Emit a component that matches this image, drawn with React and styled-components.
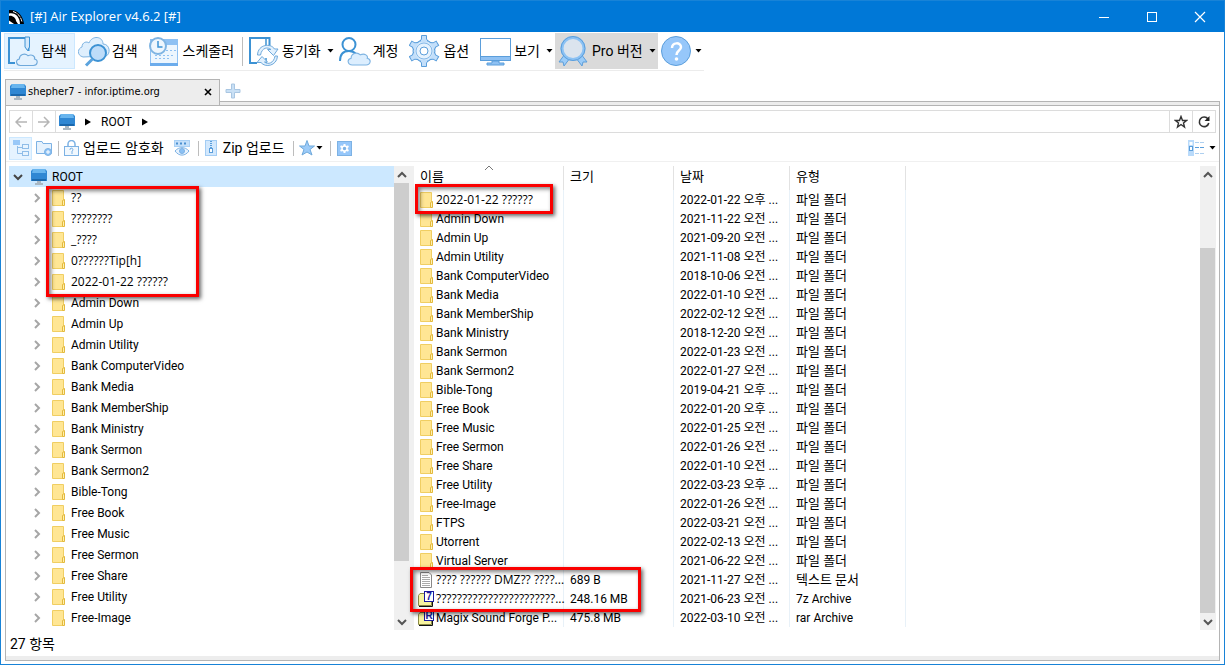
import React, { useState } from 'react'
import styled, { createGlobalStyle } from 'styled-components';

const folders = [
  "Admin Down",
  "Admin Up",
  "Admin Utility",
  "Bank ComputerVideo",
  "Bank Media",
  "Bank MemberShip",
  "Bank Ministry",
  "Bank Sermon",
  "Bank Sermon2",
  "Bible-Tong",
  "Free Book",
  "Free Music",
  "Free Sermon",
  "Free Share",
  "Free Utility",
  "Free-Image",
];

const treeItems = ["??", "????????", "_????", "0??????Tip[h]", "2022-01-22 ??????", ...folders];

const files = [
  { name: "2022-01-22 ??????", date: "2022-01-22 오후 ..." },
  { name: "Admin Down", date: "2021-11-22 오전 ..." },
  { name: "Admin Up", date: "2021-09-20 오전 ..." },
  { name: "Admin Utility", date: "2021-11-08 오전 ..." },
  { name: "Bank ComputerVideo", date: "2018-10-06 오전 ..." },
  { name: "Bank Media", date: "2022-01-10 오전 ..." },
  { name: "Bank MemberShip", date: "2022-02-12 오전 ..." },
  { name: "Bank Ministry", date: "2018-12-20 오전 ..." },
  { name: "Bank Sermon", date: "2022-01-23 오전 ..." },
  { name: "Bank Sermon2", date: "2022-01-27 오전 ..." },
  { name: "Bible-Tong", date: "2019-04-21 오후 ..." },
  { name: "Free Book", date: "2022-01-20 오후 ..." },
  { name: "Free Music", date: "2022-01-25 오전 ..." },
  { name: "Free Sermon", date: "2022-01-26 오전 ..." },
  { name: "Free Share", date: "2022-01-10 오전 ..." },
  { name: "Free Utility", date: "2022-03-23 오후 ..." },
  { name: "Free-Image", date: "2022-01-26 오전 ..." },
  { name: "FTPS", date: "2022-03-21 오전 ..." },
  { name: "Utorrent", date: "2022-02-13 오전 ..." },
  { name: "Virtual Server", date: "2021-06-22 오전 ..." },
  { name: "???? ?????? DMZ?? ????...", size: "689 B", date: "2021-11-27 오전 ...", type: "텍스트 문서", icon: "text" },
  { name: "???????????????????????...", size: "248.16 MB", date: "2021-06-23 오전 ...", type: "7z Archive", icon: "7z" },
  { name: "Magix Sound Forge P...", size: "475.8 MB", date: "2022-03-10 오전 ...", type: "rar Archive", icon: "rar" },
];

const BLUE = "#3c92d4";
const PALE = "#d3e8fb";
const MID = "#8fc1f3";

const cloudPath = "M5 12 C1 12 0 7 4 6 C4 2 9 0 12 3 C16 1 19 4 18 6 C22 7 21 12 17 12 Z";

const ExploreIcon = () => (
  <svg width="32" height="32" viewBox="0 0 32 32" fill="none">
    <path d="M8 28 H2 V3 H21.500 V16" stroke={BLUE} strokeWidth="2" />
    <path d="M18 2 H22.500 V12 L20.500 15.500 L18 12 Z" fill={PALE} stroke={BLUE} />
    <path transform="translate(8 17.500) scale(1.080 1.080)" d={cloudPath} fill="#e2f1fe" stroke="#6fa9db" />
  </svg>
);

const SearchIcon = () => (
  <svg width="32" height="32" viewBox="0 0 32 32" fill="none">
    <path d="M5 22 C-2 20 0 13 4 12 C4 7 9 6 11 8 C14 0 25 1 25 9 C32 9 33 19 28 21 Z" fill="#dfeffd" stroke="#7fb4e2" />
    <circle cx="20" cy="18" r="8" fill="#bddcf9" stroke={BLUE} strokeWidth="2" />
    <path d="M14.500 24 L8 30.500" stroke="#5ba3dd" strokeWidth="3" />
  </svg>
);

const ScheduleIcon = () => (
  <svg width="32" height="32" viewBox="0 0 32 32" fill="none">
    <rect x="1.500" y="4.500" width="27" height="26" fill="#edf6fe" stroke={MID} />
    <rect x="1" y="4" width="28" height="6" fill={MID} />
    <path d="M1 29.500 H29" stroke="#6cacec" strokeWidth="3" />
    <path d="M17 15.500 H27 M6 20.500 H26 M6 23.500 H20" stroke={MID} strokeDasharray="2 2" />
    <circle cx="9" cy="11" r="8" fill="#eef6fd" stroke="#7fb4e2" strokeWidth="2" />
    <path d="M9 6 V12 H13.500" stroke={BLUE} strokeWidth="1.500" />
  </svg>
);

const SyncIcon = () => (
  <svg width="32" height="32" viewBox="0 0 32 32" fill="none">
    <path d="M9 28 H2 V3 H21.500 V12" stroke={BLUE} strokeWidth="2" />
    <path d="M18 3 V12 M18 23 V28 H14" stroke={BLUE} strokeWidth="1.500" />
    <path d="M9.500 20 C10 9 23 8 26.500 14 H30 L25.500 20.500 L19.500 14.500 H23 C20 12 14 12 12.500 20 Z" fill="#e2f1fe" stroke="#6fa9db" />
    <path d="M29.500 21 C29 31 17 33 13 27.500 H9 L14 21.500 L19.500 27 H16.500 C20 30 26 28 27 21 Z" fill="#e2f1fe" stroke="#6fa9db" />
  </svg>
);

const AccountIcon = () => (
  <svg width="32" height="32" viewBox="0 0 32 32" fill="none">
    <circle cx="10" cy="9.500" r="6.500" stroke={BLUE} strokeWidth="2" />
    <path d="M1 26 C1 18 5 16 10 16 C13 16 15 17 17 19" stroke={BLUE} strokeWidth="2" />
    <path transform="translate(7.500 16.500) scale(1.150 1.120)" d={cloudPath} fill="#dceefe" stroke="#7fb4e2" />
  </svg>
);

const teeth = [0, 60, 120, 180, 240, 300];

const OptionIcon = () => (
  <svg width="32" height="32" viewBox="0 0 32 32" fill="none">
    <circle cx="15" cy="16" r="11" fill={PALE} stroke="#5b9edb" />
    {teeth.map((deg) => (
      <path key={deg} transform={`rotate(${deg} 15 16)`} d="M10.500 7 L12.500 4 V0.500 H17.500 V4 L19.500 7" fill="#c3dffa" stroke="#5b9edb" />
    ))}
    <circle cx="15" cy="16" r="8" fill="#e6f2fd" stroke="#86b9e8" />
    <circle cx="15" cy="16" r="4" fill="#fff" stroke="#5b9edb" />
  </svg>
);

const ViewIcon = () => (
  <svg width="32" height="32" viewBox="0 0 32 32" fill="none">
    <rect x="0.500" y="3.500" width="30" height="21" fill="#fff" stroke="#5b9edb" />
    <rect x="0.500" y="21.500" width="30" height="4" fill={MID} stroke="#5b9edb" />
    <path d="M12 26 H19 V28 H24 V30 H7 V28 H12 Z" fill={MID} stroke="#5b9edb" />
  </svg>
);

const ProIcon = () => (
  <svg width="32" height="32" viewBox="0 0 32 32" fill="none">
    <path d="M7 19 L1 27 L5 27 L6 31 L12 23 Z M23 19 L29 27 L25 27 L24 31 L18 23 Z" fill="#9cccf8" stroke="#5b9edb" />
    <circle cx="15" cy="13.500" r="11" fill="#dbe4ee" stroke="#8cc2f4" strokeWidth="3" />
    <circle cx="15" cy="13.500" r="12" stroke="#5b9edb" />
  </svg>
);

const HelpIcon = () => (
  <svg width="32" height="32" viewBox="0 0 32 32" fill="none">
    <circle cx="15" cy="16" r="14.500" fill="#96c7fa" stroke="#5b9edb" />
    <path d="M11 13 C11 7 20 7 20 12 C20 16 15.500 15 15.500 20" stroke="#fff" strokeWidth="2.500" />
    <circle cx="15.500" cy="24" r="1.800" fill="#fff" />
  </svg>
);

const AppIcon = () => (
  <svg width="16" height="16" viewBox="0 0 16 16">
    <path d="M1 1 C9 0 15 6 16 15 H1 Z" fill="#000" />
    <path d="M1 4.500 C7 3 12 8 12 15 H8.500 L7 11 L1 7 Z" fill="#fff" />
    <path d="M1 7 C4 6 8 9 8 12 L10 15 H6 L3 12 L1 11 Z" fill="#000" />
    <path d="M1 11.500 L6 15 H1 Z" fill="#fff" />
    <path d="M5 2.500 C10 4 13 8 14 13" stroke="#fff" strokeDasharray="4 1" fill="none" />
  </svg>
);

const MonitorIcon = () => (
  <svg width="16" height="16" viewBox="0 0 16 16">
    <path d="M2 0 H14 L16 2 V12 H0 V2 Z" fill="#2f87d3" />
    <path d="M2 0 H14 L15 4 H1 Z" fill="#68b5ee" />
    <path d="M1 10 H15 V12 H1 Z" fill="#1b68ad" />
    <path d="M6 12 H10 V14 H12 V16 H4 V14 H6 Z" fill="#a9b7c2" />
  </svg>
);

const FolderIcon = () => (
  <svg width="16" height="16" viewBox="0 0 16 16">
    <path d="M2.500 0.500 H13.500 V15.500 H2.500 Z" fill="#ffe694" stroke="#f0ce62" />
    <path d="M12.500 15.500 V10.500 L14.500 9.500 V15.500 Z" fill="#fff0b0" stroke="#e3b93c" />
  </svg>
);

const TextIcon = () => (
  <svg width="16" height="16" viewBox="0 0 16 16">
    <path d="M2.500 0.500 H11 L13.500 3 V15.500 H2.500 Z" fill="#fff" stroke="#888" />
    <path d="M4 3.500 H10 M4 5.500 H12 M4 7.500 H12 M4 9.500 H12 M4 11.500 H12 M4 13.500 H12" stroke="#aaa" />
  </svg>
);

const ArchiveIcon = ({ letter }) => (
  <svg width="16" height="16" viewBox="0 0 16 16">
    <path d="M0.500 4.500 L2 2.500 H7 V5 H13.500 V14.500 H0.500 Z" fill="#f8f4a0" stroke="#8a8a45" />
    <path d="M1 15.500 H14.500 V11" stroke="#111" fill="none" />
    <rect x="6.500" y="0.500" width="9" height="10" fill="#fff" stroke="#1a1a9c" />
    <text x="11" y="9" textAnchor="middle" fontFamily="Liberation Sans" fontWeight="bold" fontSize="10" fill="#1a1a9c">{letter}</text>
  </svg>
);

const TreeIcon = () => (
  <svg width="16" height="16" viewBox="0 0 16 16" fill="#e8f4fe" stroke="#8fbde8">
    <path d="M4.500 6 V13.500 H9 M4.500 7.500 H9" fill="none" />
    <rect x="0" y="0" width="7" height="5" fill="#98c8f8" stroke="none" />
    <rect x="9.500" y="4.500" width="6" height="4" />
    <rect x="9.500" y="11.500" width="6" height="4" />
  </svg>
);

const NewFolderIcon = () => (
  <svg width="16" height="16" viewBox="0 0 16 16" fill="#e6f2fd" stroke="#7db2e4">
    <path d="M0.500 1.500 H6 L7 3.500 H15.500 V13.500 H0.500 Z" />
    <circle cx="12" cy="12" r="3.500" fill="#8cc1f4" />
    <path d="M12 10 V14 M10 12 H14" stroke="#fff" />
  </svg>
);

const LockIcon = () => (
  <svg width="16" height="16" viewBox="0 0 16 16" fill="#f1f8fe" stroke="#7db2e4">
    <path d="M4 7 V4 A3.500 3.500 0 0 1 11 4 V7" fill="none" strokeWidth="1.500" />
    <rect x="0.500" y="6.500" width="14" height="9" />
    <path d="M6 10 A1.500 1.500 0 1 1 8 11 V14" fill="none" />
  </svg>
);

const EyeIcon = () => (
  <svg width="16" height="16" viewBox="0 0 16 16" fill="none" stroke="#7db2e4">
    <rect x="0.500" y="0.500" width="15" height="6" fill="#c5e0fa" stroke="#a9d0f5" />
    <path d="M2 3.500 H14" stroke="#4a8fd0" strokeWidth="2" strokeDasharray="2 2" />
    <path d="M1 11 C5 6.500 11 6.500 15 11 C11 16.500 5 16.500 1 11 Z" fill="#e8f3fe" />
    <circle cx="8" cy="11" r="2.500" fill="#8cc1f4" />
  </svg>
);

const ZipIcon = () => (
  <svg width="16" height="16" viewBox="0 0 16 16" fill="#d2e8fd" stroke="#a4cdf4">
    <rect x="1.500" y="0.500" width="11" height="15" />
    <path d="M7 1 V8" stroke="#5b9edb" strokeWidth="2" strokeDasharray="1 1" />
    <rect x="5.500" y="8.500" width="3" height="4" fill="#fff" stroke="#5b9edb" />
  </svg>
);

const StarIcon = () => (
  <svg width="16" height="16" viewBox="0 0 16 16">
    <path d="M8 0.500 L10 6 L15.500 6 L11 9.500 L13 15 L8 12 L3 15 L5 9.500 L0.500 6 L6 6 Z" fill="#9ccbf8" stroke="#6fa9db" />
  </svg>
);

const SmallGearIcon = () => (
  <svg width="16" height="16" viewBox="0 0 16 16">
    <rect x="1.500" y="1.500" width="14" height="14" fill="#96c7fa" stroke="#7db2e4" />
    <path d="M8.500 4 V13 M4.500 6.200 L12.500 10.800 M12.500 6.200 L4.500 10.800" stroke="#fff" strokeWidth="2" />
    <circle cx="8.500" cy="8.500" r="2.500" fill="#7db2e4" stroke="#fff" strokeWidth="1.500" />
  </svg>
);

const DetailsIcon = () => (
  <svg width="16" height="16" viewBox="0 0 16 16">
    <rect x="0" y="0" width="6" height="16" fill="#b9dafa" />
    <rect x="1.500" y="2" width="3" height="3" fill="#fff" />
    <rect x="1.500" y="6.500" width="3" height="4" fill="#fff" stroke="#5b9edb" />
    <path d="M7 2.500 H16 M7 13.500 H16" stroke="#aed0f0" strokeDasharray="4 1" />
    <path d="M7 7.500 H16" stroke="#5b9edb" strokeDasharray="4 1" />
  </svg>
);

const Caret = () => (
  <svg width="7" height="4" viewBox="0 0 7 4"><path d="M0.500 0 H6.500 L3.500 3.500 Z" /></svg>
);

const CrumbArrow = () => (
  <svg width="6" height="8" viewBox="0 0 6 8"><path d="M0 0.500 L6 4 L0 7.500 Z" /></svg>
);

const chevrons = {
  up: "M4 10 L8 6 L12 10",
  down: "M4 6 L8 10 L12 6",
  right: "M6 4 L10 8 L6 12",
};

const Chevron = ({ dir, color = "#555", width = 2 }) => (
  <svg width="16" height="16" viewBox="0 0 16 16" fill="none" stroke={color} strokeWidth={width}>
    <path d={chevrons[dir]} />
  </svg>
);

const NavArrow = ({ back }) => (
  <svg width="12" height="12" viewBox="0 0 12 12" fill="none" stroke="#b5b5b5" strokeWidth="1.500">
    <path d={back ? "M6 1 L1 6 L6 11 M1 6 H12" : "M6 1 L11 6 L6 11 M11 6 H0"} />
  </svg>
);

const fileIcons = {
  text: <TextIcon />,
  "7z": <ArchiveIcon letter="7" />,
  rar: <ArchiveIcon letter="R" />,
};

const isKorean = (text) => /[가-힣]/.test(text);
const isBroken = (text) => text.includes("??");

const ScrollBar = ({ start, size }) => (
  <ScrollTrack>
    <ScrollButton aria-label="위로"><Chevron dir="up" /></ScrollButton>
    <ScrollArea>
      <div style={{ flexGrow: start }} />
      <ScrollThumb style={{ flexGrow: size }} />
      <div style={{ flexGrow: 100 - start - size }} />
    </ScrollArea>
    <ScrollButton aria-label="아래로"><Chevron dir="down" /></ScrollButton>
  </ScrollTrack>
);

const App = () => {
  const [open, setOpen] = useState(true);

  return (
    <Window>
      <GlobalStyle />
      <TitleBar>
        <AppIcon />
        <Title>[#] Air Explorer v4.6.2 [#]</Title>
        <WindowButton aria-label="최소화">
          <svg width="12" height="12" viewBox="0 0 12 12"><path d="M1 6.500 H11" stroke="#fff" /></svg>
        </WindowButton>
        <WindowButton aria-label="최대화">
          <svg width="12" height="12" viewBox="0 0 12 12"><rect x="1.500" y="1.500" width="9" height="9" fill="none" stroke="#fff" /></svg>
        </WindowButton>
        <WindowButton aria-label="닫기">
          <svg width="12" height="12" viewBox="0 0 12 12"><path d="M1 1 L11 11 M11 1 L1 11" stroke="#fff" strokeWidth="1.200" /></svg>
        </WindowButton>
      </TitleBar>

      <Toolbar>
        <ToolButton $active><ExploreIcon />탐색</ToolButton>
        <ToolButton><SearchIcon />검색</ToolButton>
        <ToolButton><ScheduleIcon />스케줄러</ToolButton>
        <Divider $tall />
        <ToolButton $menu><SyncIcon /><MenuText>동기화</MenuText><Caret /></ToolButton>
        <ToolButton><AccountIcon />계정</ToolButton>
        <ToolButton><OptionIcon />옵션</ToolButton>
        <ToolButton $menu><ViewIcon /><MenuText>보기</MenuText><Caret /></ToolButton>
        <ToolButton $menu $pro><ProIcon /><MenuText>Pro 버전</MenuText><Caret /></ToolButton>
        <ToolButton $menu aria-label="도움말"><HelpIcon /><Caret /></ToolButton>
      </Toolbar>

      <TabRow>
        <Tab>
          <MonitorIcon />
          <TabText>shepher7 - infor.iptime.org</TabText>
          <TabClose aria-label="탭 닫기">
            <svg width="8" height="8" viewBox="0 0 8 8"><path d="M1 1 L7 7 M7 1 L1 7" stroke="#000" strokeWidth="1.600" /></svg>
          </TabClose>
        </Tab>
        <TabRest>
          <NewTab aria-label="새 탭">
            <svg width="16" height="16" viewBox="0 0 16 16">
              <path d="M6.500 1 H9.500 V6.500 H15 V9.500 H9.500 V15 H6.500 V9.500 H1 V6.500 H6.500 Z" fill="#c9e0f5" stroke="#a9c6e2" />
            </svg>
          </NewTab>
        </TabRest>
      </TabRow>

      <Panel>
        <AddressBar>
          <SquareButton aria-label="뒤로"><NavArrow back /></SquareButton>
          <SquareButton aria-label="앞으로"><NavArrow /></SquareButton>
          <Crumbs>
            <MonitorIcon />
            <CrumbArrow />
            <Crumb href="#root">ROOT</Crumb>
            <CrumbArrow />
          </Crumbs>
          <SquareButton $right aria-label="즐겨찾기">
            <svg width="14" height="14" viewBox="0 0 14 14">
              <path d="M7 1.500 L8.500 5.500 H12.500 L9.500 8 L10.500 12 L7 9.500 L3.500 12 L4.500 8 L1.500 5.500 H5.500 Z" fill="none" stroke="#333" strokeWidth="1.400" />
            </svg>
          </SquareButton>
          <SquareButton $right aria-label="새로 고침">
            <svg width="14" height="14" viewBox="0 0 14 14">
              <path d="M11 4 A4.800 4.800 0 1 0 11.800 8" fill="none" stroke="#333" strokeWidth="1.600" />
              <path d="M12.500 1 V6 H7.500 Z" fill="#222" />
            </svg>
          </SquareButton>
        </AddressBar>

        <ActionBar>
          <IconButton $active aria-label="트리"><TreeIcon /></IconButton>
          <IconButton aria-label="새 폴더"><NewFolderIcon /></IconButton>
          <Divider />
          <ActionButton><LockIcon />업로드 암호화</ActionButton>
          <ActionButton aria-label="암호 보기"><EyeIcon /></ActionButton>
          <Divider />
          <ActionButton><ZipIcon />Zip 업로드</ActionButton>
          <Divider />
          <MenuButton aria-label="즐겨찾기 메뉴"><StarIcon /><Caret /></MenuButton>
          <Divider />
          <ActionButton aria-label="설정"><SmallGearIcon /></ActionButton>
          <Spacer />
          <MenuButton $wide aria-label="보기 방식"><DetailsIcon /><Caret /></MenuButton>
        </ActionBar>

        <Main>
          <Pane $split>
            <Tree>
              <TreeRow $root>
                <Toggle aria-label="ROOT 펼치기" onClick={() => setOpen(!open)}>
                  <Chevron dir={open ? "down" : "right"} color="#444" />
                </Toggle>
                <MonitorIcon />ROOT
              </TreeRow>
              {open && treeItems.map((name) => (
                <TreeRow key={name}>
                  <Toggle aria-label={name}><Chevron dir="right" color="#a6a6a6" /></Toggle>
                  <FolderIcon />
                  <ItemName $broken={isBroken(name)}>{name}</ItemName>
                </TreeRow>
              ))}
            </Tree>
            <ScrollBar start={0} size={88} />
            <Marker $left={37} $top={20} $width={153} $height={111} />
          </Pane>

          <Pane>
            <ListArea>
              <FileTable>
                <colgroup>
                  <col width="150" />
                  <col width="110" />
                  <col width="116" />
                  <col width="116" />
                  <col />
                </colgroup>
                <thead>
                  <tr>
                    <HeadCell>이름<SortMark><Chevron dir="up" color="#777" width={1} /></SortMark></HeadCell>
                    <HeadCell>크기</HeadCell>
                    <HeadCell>날짜</HeadCell>
                    <HeadCell>유형</HeadCell>
                    <td />
                  </tr>
                </thead>
                <tbody>
                  {files.map(({ name, size, date, type = "파일 폴더", icon }) => (
                    <tr key={name}>
                      <Cell>
                        <FileName>
                          {fileIcons[icon] || <FolderIcon />}
                          <ItemName $broken={isBroken(name)}>{name}</ItemName>
                        </FileName>
                      </Cell>
                      <Cell>{size}</Cell>
                      <Cell>{date}</Cell>
                      <Cell $large={isKorean(type)}>{type}</Cell>
                      <td />
                    </tr>
                  ))}
                </tbody>
              </FileTable>
            </ListArea>
            <ScrollBar start={15} size={85} />
            <Marker $left={1} $top={18} $width={138} $height={30} />
            <Marker $left={-4} $top={401} $width={231} $height={45} />
          </Pane>
        </Main>

        <Status>27 항목</Status>
      </Panel>
    </Window>
  )
}

export default App

const GlobalStyle = createGlobalStyle`
  * {
    box-sizing: border-box;
  }
  body {
    margin: 0;
    background: #fff;
    color: #000;
    font: 12px/16px Roboto, "Noto Sans CJK KR", sans-serif;
  }
  button {
    margin: 0;
    padding: 0;
    border: 0;
    background: none;
    color: inherit;
    font: inherit;
  }
  svg {
    display: block;
    flex-shrink: 0;
  }
`
const Window = styled.div`
  display: flex;
  flex-direction: column;
  min-height: 100vh;
  border: 1px solid #1883d7;
  border-top: 0;
`
const TitleBar = styled.header`
  display: flex;
  align-items: center;
  gap: 6px;
  height: 32px;
  padding: 0 3px 0 7px;
  background: #0078d7;
  border-top: 1px solid #1883d7;
  color: #fff;
`
const Title = styled.h1`
  flex: 1;
  margin: 0;
  padding-bottom: 2px;
  font: 13px/16px "Open Sans", sans-serif;
`
const WindowButton = styled.button`
  display: flex;
  align-items: center;
  justify-content: center;
  width: 42px;
  height: 31px;
`
const Toolbar = styled.nav`
  display: flex;
  align-items: center;
  align-self: flex-start;
  height: 39px;
  margin-left: 3px;
  border-bottom: 1px solid #ececec;
`
const ToolButton = styled.button`
  display: flex;
  align-items: center;
  gap: 2px;
  height: 36px;
  padding: 0 ${(props) => (props.$menu ? 2 : 8)}px 0 3px;
  background: ${(props) => (props.$active ? "#e5f3ff" : props.$pro ? "#dadada" : "transparent")};
  box-shadow: ${(props) => (props.$active ? "inset 0 0 0 1px #cce8ff" : "none")};
  font-size: 14px;
  white-space: nowrap;
`
const MenuText = styled.span`
  margin-right: 4px;
`
const Divider = styled.div`
  width: 1px;
  height: ${(props) => (props.$tall ? 29 : 15)}px;
  margin: ${(props) => (props.$tall ? "0 2px 0 0" : "0 5px 0 3px")};
  background: #bdbdbd;
`
const TabRow = styled.div`
  display: flex;
  height: 26px;
  margin: 8px 4px 0 4px;
  background: linear-gradient(#fff 22px, #ededed 22px);
`
const Tab = styled.div`
  display: flex;
  align-items: center;
  gap: 2px;
  width: 215px;
  padding: 0 7px 1px 4px;
  background: #ededed;
  border: 1px solid #b4b4b4;
  border-bottom: 0;
`
const TabText = styled.span`
  flex: 1;
  font-family: "DejaVu Sans Condensed", "DejaVu Sans", sans-serif;
  font-size: 11px;
  white-space: nowrap;
`
const TabClose = styled.button`
  display: flex;
`
const TabRest = styled.div`
  flex: 1;
  padding: 4px 5px;
  background: linear-gradient(transparent 22px, #b4b4b4 22px, #b4b4b4 23px, transparent 23px);
  border-right: 1px solid #b4b4b4;
  border-image: linear-gradient(transparent 22px, #b4b4b4 22px) 1;
`
const NewTab = styled.button`
  display: flex;
`
const Panel = styled.section`
  flex: 1;
  display: flex;
  flex-direction: column;
  margin: 0 4px 3px 4px;
  border: 1px solid #b4b4b4;
`
const AddressBar = styled.div`
  display: flex;
  height: 23px;
  margin: 4px 3px 0;
  border: 1px solid #dcdcdc;
`
const SquareButton = styled.button`
  display: flex;
  align-items: center;
  justify-content: center;
  width: 23px;
  border: 0 solid #dcdcdc;
  border-width: ${(props) => (props.$right ? "0 0 0 1px" : "0 1px 0 0")};
`
const Crumbs = styled.div`
  flex: 1;
  display: flex;
  align-items: center;
  gap: 10px;
  padding-left: 3px;
`
const Crumb = styled.a`
  color: #000;
  text-decoration: none;
`
const ActionBar = styled.div`
  display: flex;
  align-items: center;
  height: 29px;
  padding: 2px 3px 0;
  border-bottom: 1px solid #f0f0f0;
`
const IconButton = styled.button`
  display: flex;
  align-items: center;
  justify-content: center;
  width: 23px;
  height: 23px;
  background: ${(props) => (props.$active ? "#e5f3ff" : "transparent")};
  box-shadow: ${(props) => (props.$active ? "inset 0 0 0 1px #cce8ff" : "none")};
`
const ActionButton = styled.button`
  display: flex;
  align-items: center;
  gap: 3px;
  height: 23px;
  padding-right: 5px;
  font-size: 14px;
  white-space: nowrap;
  & + & {
    margin-left: 5px;
  }
`
const MenuButton = styled.button`
  display: flex;
  align-items: center;
  gap: ${(props) => (props.$wide ? 5 : 1)}px;
  height: 23px;
  padding-right: ${(props) => (props.$wide ? 0 : 4)}px;
`
const Spacer = styled.div`
  flex: 1;
`
const Main = styled.main`
  flex: 1;
  display: grid;
  grid-template-columns: 1fr 2fr;
  gap: 4px;
  padding: 4px 3px 0;
`
const Pane = styled.div`
  position: relative;
  display: flex;
  min-width: 0;
  box-shadow: ${(props) => (props.$split ? "4px 0 #f0f0f0" : "none")};
`
const Tree = styled.ul`
  flex: 1;
  margin: 0;
  padding: 0;
  list-style: none;
`
const TreeRow = styled.li`
  display: flex;
  align-items: center;
  gap: 5px;
  height: 21px;
  padding-left: ${(props) => (props.$root ? 1 : 20)}px;
  background: ${(props) => (props.$root ? "#cce8ff" : "transparent")};
  white-space: nowrap;
`
const Toggle = styled.button`
  display: flex;
`
const ItemName = styled.span`
  font-family: ${(props) => (props.$broken ? '"Open Sans"' : "Roboto")}, "Noto Sans CJK KR", sans-serif;
`
const ListArea = styled.div`
  flex: 1;
  min-width: 0;
`
const FileTable = styled.table`
  width: 100%;
  table-layout: fixed;
  border-collapse: separate;
  border-spacing: 0;
`
const HeadCell = styled.th`
  position: relative;
  height: 24px;
  padding: 0 0 2px 6px;
  border-right: 1px solid #e2e2e2;
  font-size: 13px;
  font-weight: normal;
  text-align: left;
`
const SortMark = styled.span`
  position: absolute;
  top: -6px;
  left: 50%;
  margin-left: -8px;
`
const Cell = styled.td`
  height: 19px;
  padding: 0 0 0 6px;
  border-right: 1px solid #e8f1f8;
  font-size: ${(props) => (props.$large ? 13 : 12)}px;
  line-height: 18px;
  white-space: nowrap;
  &:first-child {
    padding-left: 4px;
  }
`
const FileName = styled.div`
  display: flex;
  align-items: center;
  gap: 2px;
`
const ScrollTrack = styled.div`
  display: flex;
  flex-direction: column;
  width: 16px;
  background: #f0f0f0;
`
const ScrollButton = styled.button`
  display: flex;
  align-items: center;
  justify-content: center;
  height: 17px;
`
const ScrollArea = styled.div`
  flex: 1;
  display: flex;
  flex-direction: column;
`
const ScrollThumb = styled.div`
  margin-right: 1px;
  background: #cdcdcd;
`
const Marker = styled.div`
  position: absolute;
  left: ${(props) => props.$left}px;
  top: ${(props) => props.$top}px;
  width: ${(props) => props.$width}px;
  height: ${(props) => props.$height}px;
  border: 3px solid #fa0000;
  box-shadow: 2px 2px 4px rgba(0, 0, 0, 0.6), inset 2px 2px 4px rgba(0, 0, 0, 0.5);
  pointer-events: none;
`
const Status = styled.footer`
  height: 30px;
  padding: 6px 4px 0;
  border-bottom: 4px solid #ededed;
  font-size: 14px;
`
